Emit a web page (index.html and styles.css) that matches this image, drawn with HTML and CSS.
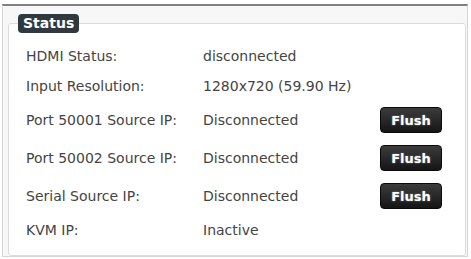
FILE: index.html
```html
<!DOCTYPE html>
<html lang="en">
<head>
    <meta charset="UTF-8">
    <meta name="viewport" content="width=device-width, initial-scale=1.0">
    <title>Status</title>
    <link rel="stylesheet" href="styles.css">
</head>
<body>
    <div class="panel">
        <fieldset class="status-box">
            <legend>Status</legend>
            <div class="status-grid">
                <div class="row">
                    <span class="label">HDMI Status:</span>
                    <span class="value">disconnected</span>
                </div>
                <div class="row">
                    <span class="label">Input Resolution:</span>
                    <span class="value">1280x720 (59.90 Hz)</span>
                </div>
                <div class="row row-btn">
                    <span class="label">Port 50001 Source IP:</span>
                    <span class="value">Disconnected</span>
                    <button type="button" class="btn">Flush</button>
                </div>
                <div class="row row-btn">
                    <span class="label">Port 50002 Source IP:</span>
                    <span class="value">Disconnected</span>
                    <button type="button" class="btn">Flush</button>
                </div>
                <div class="row row-btn">
                    <span class="label">Serial Source IP:</span>
                    <span class="value">Disconnected</span>
                    <button type="button" class="btn">Flush</button>
                </div>
                <div class="row">
                    <span class="label">KVM IP:</span>
                    <span class="value">Inactive</span>
                </div>
            </div>
        </fieldset>
    </div>
</body>
</html>
```

FILE: styles.css
```css
body {
    margin: 0;
    background: #fff;
    font-family: "DejaVu Sans", Verdana, sans-serif;
    font-size: 14px;
    color: #444;
}
.panel {
    margin: 4px 3px 0 2px;
    padding: 8px 1px 0 5px;
    border: 1px solid #d6d6d6;
    border-top: 2px solid #808080;
    background: #f7f7f7;
}
.status-box {
    margin: 0;
    padding: 8px 10px 10px 9px;
    border: 1px solid #dcdcdc;
    border-radius: 3px;
    background: #fff;
}
.status-box legend {
    padding: 0 5px;
    height: 19px;
    line-height: 19px;
    background: #30393d;
    color: #fff;
    font-weight: bold;
    font-size: 14px;
    border-radius: 4px;
}
.status-grid {
    padding: 0 13px 0 8px;
}
.row {
    display: grid;
    grid-template-columns: 177px 1fr auto;
    align-items: center;
    height: 30px;
}
.row-btn {
    height: 38px;
}
.btn {
    width: 62px;
    height: 26px;
    padding: 0;
    border: 1px solid #0a0a0a;
    border-radius: 4px;
    background: linear-gradient(#3c3c3c, #151515);
    color: #fff;
    font-family: "DejaVu Sans", Verdana, sans-serif;
    font-size: 13px;
    font-weight: bold;
    text-shadow: 0 0 2px #888;
    cursor: pointer;
}
```
